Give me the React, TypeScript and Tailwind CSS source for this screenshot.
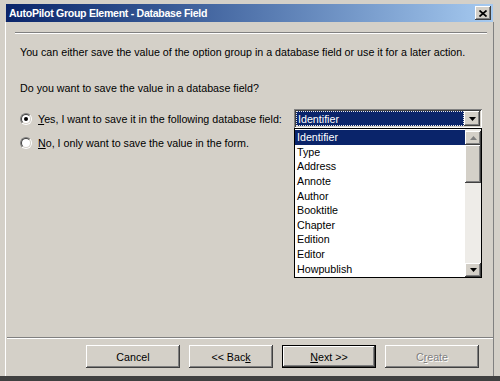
import React from 'react';

const items = ['Identifier', 'Type', 'Address', 'Annote', 'Author', 'Booktitle', 'Chapter', 'Edition', 'Editor', 'Howpublish'];

const raised =
  'bg-[#d4d0c8] shadow-[inset_-1px_-1px_#404040,inset_1px_1px_#ffffff,inset_-2px_-2px_#808080,inset_2px_2px_#d4d0c8]';

function Arrow({ color = '#000000' }: { color?: string }) {
  return (
    <svg width="7" height="4" viewBox="0 0 7 4">
      <path d="M0 0h7L3.5 4z" fill={color} />
    </svg>
  );
}

function Radio({ checked }: { checked?: boolean }) {
  return (
    <div className="w-[12px] h-[12px] shrink-0 rounded-full border border-t-[#808080] border-l-[#808080] border-b-white border-r-white flex">
      <div className="flex-1 rounded-full border border-t-[#404040] border-l-[#404040] border-b-[#d4d0c8] border-r-[#d4d0c8] bg-white flex items-center justify-center">
        {checked && <div className="w-[4px] h-[4px] rounded-full bg-black" />}
      </div>
    </div>
  );
}

function Button({ children, isDefault, disabled, w = 'w-[94px]' }: { children: React.ReactNode; isDefault?: boolean; disabled?: boolean; w?: string }) {
  return (
    <div
      className={`${w} h-[23px] flex items-center justify-center ${raised} ${
        isDefault ? 'border border-black' : ''
      } ${disabled ? 'text-[#808080] [text-shadow:1px_1px_#ffffff]' : 'text-black'}`}
    >
      {children}
    </div>
  );
}

export default function App() {
  return (
    <div className="w-[500px] h-[381px] bg-[#d4d0c8] flex flex-col overflow-hidden font-['Tahoma','Liberation_Sans',sans-serif] text-[10.7px] leading-[14px] text-black select-none">
      {/* Title bar */}
      <div className="h-[4px]" />
      <div className="ml-[6px] mr-[7px] h-[18px] bg-gradient-to-r from-[#0a246a] to-[#a6caf0] flex items-center justify-between pl-[3px] pr-[2px]">
        <span className="text-white font-bold text-[10.6px] tracking-[-0.3px]">AutoPilot Group Element - Database Field</span>
        <div className={`w-[16px] h-[14px] flex items-center justify-center ${raised}`}>
          <svg width="8" height="7" viewBox="0 0 8 7">
            <path d="M0.5 0.5L7.5 6.5M7.5 0.5L0.5 6.5" stroke="#000000" strokeWidth="1.7" />
          </svg>
        </div>
      </div>

      {/* Body */}
      <div className="flex-1 ml-[5px] mr-[6px] border-l border-white border-r border-r-[#808080] flex flex-col">
        <div className="mt-[10px] ml-[9px] w-[472px] border-t border-[#808080] border-b border-b-white" />

        <p className="mt-[11px] ml-[14px] whitespace-nowrap">
          You can either save the value of the option group in a database field or use it for a later action.
        </p>
        <p className="mt-[22px] ml-[14px] whitespace-nowrap">Do you want to save the value in a database field?</p>

        <div className="mt-[14px] ml-[14px] h-[19px] flex items-center">
          <Radio checked />
          <span className="ml-[6px] w-[256px] whitespace-nowrap">
            <span className="underline">Y</span>es, I want to save it in the following database field:
          </span>
          <div className="relative w-[188px] h-[19px] bg-white shadow-[inset_1px_1px_#808080,inset_-1px_-1px_#ffffff,inset_2px_2px_#404040,inset_-2px_-2px_#d4d0c8] flex items-center p-[2px]">
            <div className="flex-1 h-full bg-[#0a246a] text-white flex items-center pl-[2px] outline-1 outline-dotted outline-[#e8e8e8] -outline-offset-1">
              Identifier
            </div>
            <div className={`w-[16px] h-full flex items-center justify-center ${raised}`}>
              <Arrow />
            </div>

            {/* Dropdown list */}
            <div className="absolute left-0 top-[19px] w-[188px] h-[150px] bg-white border border-black flex z-10">
              <div className="flex-1 pt-[1px]">
                {items.map((it, i) => (
                  <div
                    key={it}
                    className={`h-[14.6px] flex items-center pl-[2px] ${i === 0 ? 'bg-[#0a246a] text-white' : ''}`}
                  >
                    {it}
                  </div>
                ))}
              </div>
              <div className="w-[16px] flex flex-col bg-[#eeece8] pt-[2px]">
                <div className={`h-[14px] flex items-center justify-center ${raised}`}>
                  <svg width="7" height="4" viewBox="0 0 7 4">
                    <path d="M0 4h7L3.5 0z" fill="#808080" />
                  </svg>
                </div>
                <div className={`h-[38px] ${raised}`} />
                <div className="flex-1" />
                <div className={`h-[14px] flex items-center justify-center ${raised}`}>
                  <Arrow />
                </div>
              </div>
            </div>
          </div>
        </div>

        <div className="mt-[8px] ml-[14px] h-[14px] flex items-center">
          <Radio />
          <span className="ml-[6px] whitespace-nowrap">
            <span className="underline">N</span>o, I only want to save the value in the form.
          </span>
        </div>

        <div className="flex-1" />

        <div className="ml-[1px] border-t border-[#808080] border-b border-b-white" />
        <div className="mt-[6px] mb-[8px] flex gap-[9px] pl-[80px]">
          <Button>Cancel</Button>
          <Button w="w-[84px]">
            &lt;&lt; Bac<span className="underline">k</span>
          </Button>
          <Button isDefault>
            <span className="underline">N</span>ext &gt;&gt;
          </Button>
          <Button disabled>
            C<span className="underline">r</span>eate
          </Button>
        </div>
      </div>
      <div className="h-[5px] bg-[#404040]" />
    </div>
  );
}
